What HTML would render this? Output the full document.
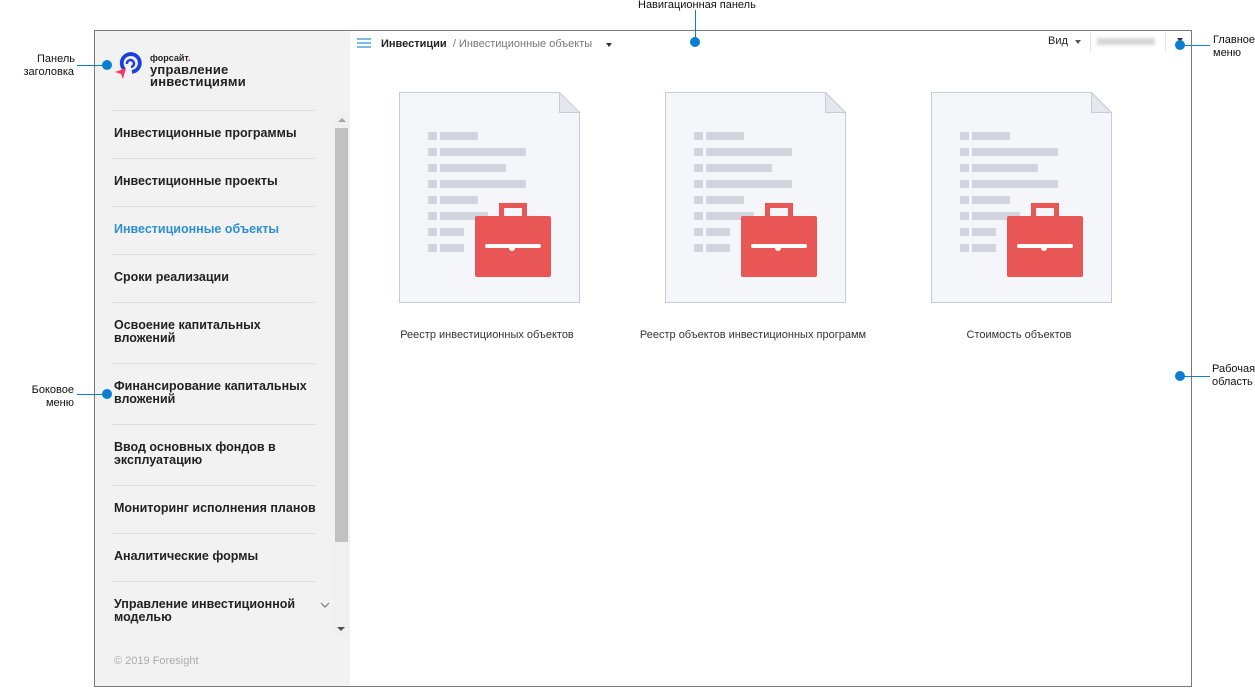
<!DOCTYPE html>
<html><head><meta charset="utf-8"><style>
*{margin:0;padding:0;box-sizing:border-box}
body{width:1255px;height:688px;background:#fff;position:relative;font-family:"Liberation Sans",Arial,sans-serif;overflow:hidden}
.a{position:absolute}
.frame{left:94px;top:30px;width:1098px;height:657px;border:1px solid #7a7a7a}
.side{left:95px;top:31px;width:255px;height:655px;background:#f2f2f2}
.sep{position:absolute;left:112px;width:203px;height:1px;background:#dedede}
.mi{position:absolute;left:114px;font-size:12.5px;font-weight:bold;color:#222;line-height:13px;width:222px}
.lbl{font-size:11px;color:#111;line-height:13px}
.dot{position:absolute;width:10px;height:10px;border-radius:50%;background:#0a7ed0}
.ln{position:absolute;height:1px;background:#0a7ed0}
.cap{position:absolute;font-size:11px;color:#333;text-align:center;width:260px}
</style></head><body>
<div class="a frame"></div>
<div class="a side"></div>

<svg class="a" style="left:110px;top:48px" width="40" height="34" viewBox="0 0 40 34">
<path d="M14 21 A9 9 0 1 1 22 24" fill="none" stroke="#1b3fd9" stroke-width="3.8"/>
<path d="M17 16 A3.5 3.5 0 1 1 21 19" fill="none" stroke="#1b3fd9" stroke-width="2.5"/>
<path d="M5 24 L16 20 L13 31 L11 26 Z" fill="#f0386b"/>
</svg>
<div class="a" style="left:150px;top:53px;font-size:9px;font-weight:bold;color:#222">форсайт<span style="color:#f0386b">.</span></div>
<div class="a" style="left:150px;top:64px;font-size:13px;font-weight:bold;color:#222;line-height:12px;letter-spacing:0.2px">управление<br>инвестициями</div>

<div class="a" style="left:334px;top:114px;width:15px;height:524px;background:#f0f0f0"></div>
<div class="a" style="left:335px;top:128px;width:13px;height:414px;background:#c1c1c1"></div>
<div class="a" style="left:338px;top:118px;width:0;height:0;border-left:4px solid transparent;border-right:4px solid transparent;border-bottom:4px solid #a3a3a3"></div>
<div class="a" style="left:337px;top:627px;width:0;height:0;border-left:4px solid transparent;border-right:4px solid transparent;border-top:4px solid #505050"></div>

<div class="sep" style="top:110px"></div>
<div class="mi" style="top:127px">Инвестиционные программы</div>
<div class="sep" style="top:158px"></div>
<div class="mi" style="top:175px">Инвестиционные проекты</div>
<div class="sep" style="top:206px"></div>
<div class="mi" style="top:223px;color:#2e8fd4">Инвестиционные объекты</div>
<div class="sep" style="top:254px"></div>
<div class="mi" style="top:271px">Сроки реализации</div>
<div class="sep" style="top:302px"></div>
<div class="mi" style="top:319px">Освоение капитальных<br>вложений</div>
<div class="sep" style="top:363px"></div>
<div class="mi" style="top:380px">Финансирование капитальных<br>вложений</div>
<div class="sep" style="top:424px"></div>
<div class="mi" style="top:441px">Ввод основных фондов в<br>эксплуатацию</div>
<div class="sep" style="top:485px"></div>
<div class="mi" style="top:502px;white-space:nowrap">Мониторинг исполнения планов</div>
<div class="sep" style="top:533px"></div>
<div class="mi" style="top:550px">Аналитические формы</div>
<div class="sep" style="top:581px"></div>
<div class="mi" style="top:598px">Управление инвестиционной<br>моделью</div>
<svg class="a" style="left:320px;top:602px" width="10" height="6"><path d="M1 1 L5 5 L9 1" fill="none" stroke="#777" stroke-width="1.2"/></svg>
<div class="a" style="left:114px;top:655px;font-size:11px;color:#aaa">© 2019 Foresight</div>

<svg class="a" style="left:357px;top:38px" width="14" height="10"><path d="M0 1H14M0 5H14M0 9H14" stroke="#2e8fd4" stroke-width="1.2"/></svg>
<div class="a" style="left:381px;top:38px;font-size:11px;color:#222"><b>Инвестиции</b> <span style="color:#777">&nbsp;/ Инвестиционные объекты</span></div>
<div class="a" style="left:606px;top:43px;border-left:3.5px solid transparent;border-right:3.5px solid transparent;border-top:4px solid #333"></div>
<div class="a" style="left:1048px;top:35px;font-size:11px;color:#222">Вид</div>
<div class="a" style="left:1075px;top:40px;border-left:3.5px solid transparent;border-right:3.5px solid transparent;border-top:4px solid #555"></div>
<div class="a" style="left:1090px;top:32px;width:1px;height:20px;background:#e6e6e6"></div>
<div class="a" style="left:1097px;top:38px;width:58px;height:7px;background:#d6d6d6;filter:blur(1.5px)"></div>
<div class="a" style="left:1165px;top:32px;width:1px;height:20px;background:#e6e6e6"></div>

<svg width="0" height="0" style="position:absolute"><defs>
<g id="doc">
<path d="M0.5 0.5H160.5L180.5 20.5V210.5H0.5Z" fill="#f4f6f9" stroke="#c6ccd4"/>
<path d="M160.5 0.5V20.5H180.5Z" fill="#e4e8ee" stroke="#c6ccd4"/>
<g fill="#d0d5dd">
<rect x="29" y="40" width="9" height="8"/><rect x="41" y="40" width="38" height="8"/>
<rect x="29" y="56" width="9" height="8"/><rect x="41" y="56" width="86" height="8"/>
<rect x="29" y="72" width="9" height="8"/><rect x="41" y="72" width="66" height="8"/>
<rect x="29" y="88" width="9" height="8"/><rect x="41" y="88" width="86" height="8"/>
<rect x="29" y="104" width="9" height="8"/><rect x="41" y="104" width="38" height="8"/>
<rect x="29" y="120" width="9" height="8"/><rect x="41" y="120" width="48" height="8"/>
<rect x="29" y="136" width="9" height="8"/><rect x="41" y="136" width="24" height="8"/>
<rect x="29" y="152" width="9" height="8"/><rect x="41" y="152" width="24" height="8"/>
</g>
<path d="M100 111H128V124H123V116H105V124H100Z" fill="#e85656"/>
<rect x="76" y="124" width="76" height="61" rx="2" fill="#e85656"/>
<rect x="86" y="152" width="56" height="4" rx="2" fill="#fff"/>
<circle cx="113" cy="156" r="3" fill="#fff"/>
</g></defs></svg>
<svg class="a" style="left:399px;top:92px" width="182" height="212"><use href="#doc"/></svg>
<svg class="a" style="left:665px;top:92px" width="182" height="212"><use href="#doc"/></svg>
<svg class="a" style="left:931px;top:92px" width="182" height="212"><use href="#doc"/></svg>
<div class="cap" style="left:357px;top:329px">Реестр инвестиционных объектов</div>
<div class="cap" style="left:623px;top:329px">Реестр объектов инвестиционных программ</div>
<div class="cap" style="left:889px;top:329px">Стоимость объектов</div>

<div class="a lbl" style="left:638px;top:-1px">Навигационная панель</div>
<div class="ln" style="left:695px;top:10px;width:1px;height:32px"></div>
<div class="dot" style="left:690px;top:37px"></div>

<div class="a lbl" style="left:37px;top:53px;text-align:right;width:37px">Панель</div>
<div class="a lbl" style="left:23px;top:66px;text-align:right;width:51px">заголовка</div>
<div class="ln" style="left:77px;top:65px;width:30px"></div>
<div class="dot" style="left:102px;top:60px"></div>

<div class="a lbl" style="left:31px;top:384px;text-align:right;width:43px">Боковое</div>
<div class="a lbl" style="left:31px;top:397px;text-align:right;width:43px">меню</div>
<div class="ln" style="left:77px;top:394px;width:30px"></div>
<div class="dot" style="left:102px;top:389px"></div>

<div class="a lbl" style="left:1213px;top:34px">Главное</div>
<div class="a lbl" style="left:1213px;top:47px">меню</div>
<div class="a" style="left:1177px;top:38px;border-left:3.5px solid transparent;border-right:3.5px solid transparent;border-top:4px solid #333"></div>
<div class="ln" style="left:1180px;top:45px;width:30px"></div>
<div class="dot" style="left:1175px;top:40px"></div>

<div class="a lbl" style="left:1212px;top:363px">Рабочая</div>
<div class="a lbl" style="left:1212px;top:376px">область</div>
<div class="ln" style="left:1180px;top:376px;width:30px"></div>
<div class="dot" style="left:1175px;top:371px"></div>
</body></html>
